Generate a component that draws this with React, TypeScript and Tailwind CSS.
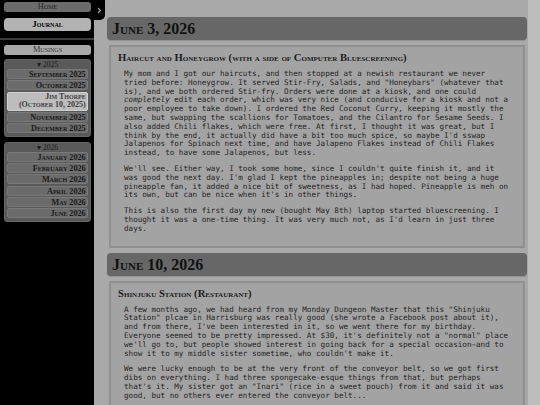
import React from 'react';

const serif = "font-['Liberation_Serif','Times_New_Roman',serif] [font-variant:small-caps]";
const mono = "font-['DejaVu_Sans_Mono','Liberation_Mono',monospace]";

const GROUPS = [
  {
    year: '2025',
    items: ['September 2025', 'October 2025', 'Jim Thorpe|(October 10, 2025)', 'November 2025', 'December 2025'],
  },
  {
    year: '2026',
    items: ['January 2026', 'February 2026', 'March 2026', 'April 2026', 'May 2026', 'June 2026'],
  },
];

const POSTS = [
  {
    date: 'June 3, 2026',
    title: 'Haircut and Honeygrow (with a side of Computer Bluescreening)',
    paras: [
      <>
        My mom and I got our haircuts, and then stopped at a newish restaurant we never tried before: Honeygrow. It
        served Stir-Fry, Salads, and "Honeybars" (whatever that is), and we both ordered Stir-fry. Orders were done at
        a kiosk, and one could <em>completely</em> edit each order, which was very nice (and conducive for a kiosk and
        not a poor employee to take down). I ordered the Red Coconut Curry, keeping it mostly the same, but swapping
        the scallions for Tomatoes, and the Cilantro for Sesame Seeds. I also added Chili flakes, which were free. At
        first, I thought it was great, but I think by the end, it actually did have a bit too much spice, so maybe I'd
        sswap Jalapenos for Spinach next time, and have Jalapeno Flakes instead of Chili Flakes instead, to have some
        Jalapenos, but less.
      </>,
      <>
        We'll see. Either way, I took some home, since I couldn't quite finish it, and it was good the next day. I'm
        glad I kept the pineapples in; despite not being a huge pineapple fan, it added a nice bit of sweetness, as I
        had hoped. Pineapple is meh on its own, but can be nice when it's in other things.
      </>,
      <>
        This is also the first day my new (bought May 8th) laptop started bluescreening. I thought it was a one-time
        thing. It was very much not, as I'd learn in just three days.
      </>,
    ],
  },
  {
    date: 'June 10, 2026',
    title: 'Shinjuku Station (Restaurant)',
    paras: [
      <>
        A few months ago, we had heard from my Monday Dungeon Master that this "Shinjuku Station" plcae in Harrisburg
        was really good (she wrote a Facebook post about it), and from there, I've been interested in it, so we went
        there for my birthday. Everyone seemed to be pretty impressed. At $30, it's definitely not a "normal" place
        we'll go to, but people showed interest in going back for a special occasion—and to show it to my middle
        sister sometime, who couldn't make it.
      </>,
      <>
        We were lucky enough to be at the very front of the conveyor belt, so we got first dibs on everything. I had
        three spongecake-esque things from that, but perhaps that's it. My sister got an "Inari" (rice in a sweet
        pouch) from it and said it was good, but no others ever entered the conveyor belt...
      </>,
    ],
  },
];

function Sidebar() {
  return (
    <aside className={`w-[94px] shrink-0 bg-black flex flex-col pt-[2px] ${serif}`}>
      <div className="mx-[4px] mr-[3px] h-[10px] rounded-[3px] bg-[#6b6b6b] text-[#262626] text-[8.3px] leading-[10px] text-center">
        Home
      </div>
      <div className="mx-[4px] mr-[3px] mt-[6px] h-[12.5px] rounded-[4px] bg-[#b3b3b3] text-black font-bold text-[9px] leading-[12.5px] text-center">
        Journal
      </div>
      <div className="mt-[7px] h-[2px] bg-[#3d3d3d]" />
      <div className="mx-[4px] mr-[3px] mt-[5px] h-[10px] rounded-[3px] bg-[#a9a9a9] text-[#333] text-[8.3px] leading-[10px] text-center">
        Musings
      </div>
      {GROUPS.map((g) => (
        <div
          key={g.year}
          className="ml-[4px] mr-[3px] mt-[4.5px] rounded-[3px] bg-[#5a5a5a] border border-[#646464] px-[2.3px] pb-[3px]"
        >
          <div className="h-[9px] text-[7.5px] leading-[10px] text-center text-[#1c1c1c]">▾ {g.year}</div>
          <div className="flex flex-col gap-[1.3px]">
            {g.items.map((it) => {
              const lines = it.split('|');
              const hi = lines.length > 1;
              return (
                <div
                  key={it}
                  className={
                    hi
                      ? 'h-[19px] rounded-[2px] border border-[#d0d0d0] bg-[#bdbdbd] text-[#3e3e3e] font-bold text-[8px] leading-[8.2px] text-right pr-[1px] pt-[0.5px]'
                      : 'h-[10px] rounded-[2px] border border-[#787878] bg-[#6b6b6b] text-[#1b1b1b] font-bold text-[8.2px] leading-[9px] text-right pr-[1px]'
                  }
                >
                  {lines.map((l) => (
                    <div key={l}>{l}</div>
                  ))}
                </div>
              );
            })}
          </div>
        </div>
      ))}
    </aside>
  );
}

export default function App() {
  return (
    <div className="relative flex h-[405px] w-[540px] overflow-hidden bg-[#a9a9a9]">
      <Sidebar />

      {/* sidebar toggle tab */}
      <div className="absolute left-[94px] top-0 h-[20px] w-[11px] rounded-br-[5px] bg-black flex items-center justify-center">
        <svg width="5" height="7" viewBox="0 0 5 7" className="-ml-[1px]">
          <path d="M1 1 L3.5 3.5 L1 6" fill="none" stroke="#a8a8a8" strokeWidth="1.1" />
        </svg>
      </div>

      <main className="flex-1 min-w-0 pl-[13px] pr-[1px] pt-[17px] flex flex-col gap-[5px]">
        {POSTS.map((p) => (
          <React.Fragment key={p.date}>
            <h2
              className={`h-[23px] shrink-0 rounded-[4px] bg-[#676767] pl-[5px] text-[16px] font-bold leading-[24px] text-[#111] shadow-[0_1px_1px_rgba(0,0,0,0.15)] ${serif}`}
            >
              {p.date}
            </h2>
            <article className="mx-[2px] shrink-0 border-2 border-[#909090] bg-[#a3a3a3] pt-[4px] pb-[12px] pl-[7px]">
              <h3 className={`text-[10.7px] font-bold leading-[12px] text-[#1d1d1d] ${serif}`}>{p.title}</h3>
              <div className={`mt-[7px] ml-[6px] w-[386px] flex flex-col gap-[7px] text-[7.6px] leading-[8.8px] text-[#242424] ${mono}`}>
                {p.paras.map((para, i) => (
                  <p key={i}>{para}</p>
                ))}
              </div>
            </article>
          </React.Fragment>
        ))}
      </main>

      {/* scrollbar track */}
      <div className="w-[12px] shrink-0 bg-[#bcbcbc]" />
    </div>
  );
}
